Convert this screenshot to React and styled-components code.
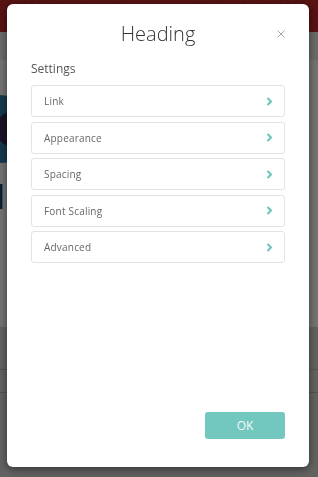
import styled, { createGlobalStyle } from 'styled-components';

const GlobalStyle = createGlobalStyle`
  html, body {
    margin: 0;
    padding: 0;
    height: 100%;
    overflow: hidden;
  }
  body {
    font-family: 'Open Sans', 'Liberation Sans', sans-serif;
    background: #ffffff;
  }
  #root {
    height: 100%;
  }
`;

// page behind the dialog
const Page = styled.div`
  height: 100%;
  display: flex;
  flex-direction: column;
  background: #f4f4f4;
`;

const TopBar = styled.div`
  height: 32px;
  background: repeating-linear-gradient(
    -55deg,
    #c42a2a 0px,
    #c42a2a 5px,
    #b52222 5px,
    #b52222 6px
  );
`;

const Hero = styled.div`
  height: 295px;
  display: flex;
  flex-direction: column;
  gap: 18px;
  padding-top: 63px;
  box-sizing: border-box;
  margin-left: -34px;
  background: linear-gradient(#eaeaea 0 28px, #ffffff 28px);
`;

const Circle = styled.div`
  width: 68px;
  height: 68px;
  border-radius: 50%;
  background: radial-gradient(circle at 70% 50%, #3a2a55 0 30%, #2f7ea8 31%);
`;

const BigLetter = styled.div`
  font-size: 34px;
  line-height: 30px;
  color: #1d3f66;
  margin-left: 14px;
`;

const Lower = styled.div`
  flex: 1;
  background: #d8d8d8;
  display: flex;
  flex-direction: column;
  padding-top: 42px;
`;

const Rule = styled.div`
  height: 22px;
  border-top: 1px solid #b8b8b8;
  border-bottom: 1px solid #b8b8b8;
`;

const Overlay = styled.div`
  position: fixed;
  inset: 0;
  background: rgba(0, 0, 0, 0.55);
  display: flex;
  justify-content: flex-start;
  padding: 4px 0 0 7px;
`;

const Dialog = styled.div`
  width: 302px;
  height: 463px;
  background: #ffffff;
  border-radius: 6px;
  box-shadow: 0 2px 8px rgba(0, 0, 0, 0.5);
  display: flex;
  flex-direction: column;
  box-sizing: border-box;
  padding: 0 24px 28px 24px;
`;

const Header = styled.div`
  height: 57px;
  display: flex;
  align-items: center;
  justify-content: center;
  position: relative;
`;

const Title = styled.h2`
  margin: 0;
  font-weight: 300;
  font-size: 20px;
  color: #333333;
  padding-top: 1px;
`;

const CloseBtn = styled.button`
  position: absolute;
  right: -4px;
  top: 22px;
  width: 16px;
  height: 16px;
  border: 0;
  padding: 0;
  background: none;
  display: flex;
  align-items: center;
  justify-content: center;
`;

const SectionLabel = styled.div`
  font-size: 12px;
  color: #555555;
  margin: -1px 0 8px 0;
`;

const List = styled.div`
  display: flex;
  flex-direction: column;
  gap: 4.5px;
`;

const Row = styled.div`
  height: 32px;
  box-sizing: border-box;
  border: 1px solid #e3e3e3;
  border-radius: 3px;
  display: flex;
  align-items: center;
  justify-content: space-between;
  padding: 0 11px 0 12px;
  font-size: 10px;
  color: #666666;
  letter-spacing: 0.2px;
`;

const Footer = styled.div`
  margin-top: auto;
  display: flex;
  justify-content: flex-end;
`;

const OkButton = styled.button`
  width: 80px;
  height: 27px;
  border: 0;
  border-radius: 3px;
  background: #72c7be;
  color: #f4fbfa;
  font-family: inherit;
  font-size: 12px;
  padding: 0;
`;

const Chevron = () => (
  <svg width="7" height="9" viewBox="0 0 7 9">
    <path d="M1.5 1 L5 4.5 L1.5 8" fill="none" stroke="#6ac4bc" strokeWidth="2" />
  </svg>
);

const CloseIcon = () => (
  <svg width="8" height="8" viewBox="0 0 8 8">
    <path d="M0.5 0.5 L7.5 7.5 M7.5 0.5 L0.5 7.5" stroke="#a6a6a6" strokeWidth="1" />
  </svg>
);

const items = ['Link', 'Appearance', 'Spacing', 'Font Scaling', 'Advanced'];

export default function App() {
  return (
    <>
      <GlobalStyle />
      <Page>
        <TopBar />
        <Hero>
          <Circle />
          <BigLetter>N</BigLetter>
        </Hero>
        <Lower>
          <Rule />
        </Lower>
      </Page>
      <Overlay>
        <Dialog>
          <Header>
            <Title>Heading</Title>
            <CloseBtn aria-label="Close">
              <CloseIcon />
            </CloseBtn>
          </Header>
          <SectionLabel>Settings</SectionLabel>
          <List>
            {items.map((item) => (
              <Row key={item}>
                <span>{item}</span>
                <Chevron />
              </Row>
            ))}
          </List>
          <Footer>
            <OkButton>OK</OkButton>
          </Footer>
        </Dialog>
      </Overlay>
    </>
  );
}
